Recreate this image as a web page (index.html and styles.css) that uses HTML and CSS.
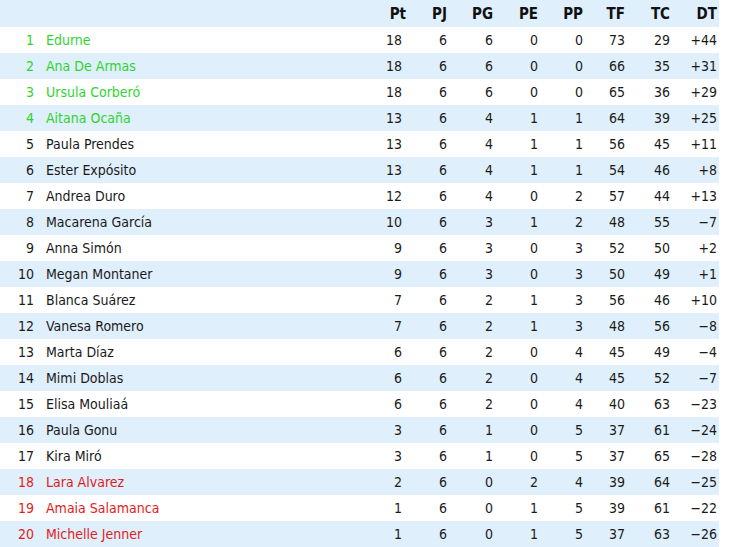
FILE: index.html
```html
<!DOCTYPE html>
<html>
<head>
<meta charset="utf-8">
<link rel="stylesheet" href="styles.css">
</head>
<body>
<div class="table">
  <div class="row head">
    <span></span><span></span>
    <span class="hpt">Pt</span><span>PJ</span><span>PG</span><span>PE</span><span>PP</span><span>TF</span><span>TC</span><span>DT</span>
  </div>
  <div class="row up"><span class="pos">1</span><span class="name">Edurne</span><span>18</span><span>6</span><span>6</span><span>0</span><span>0</span><span>73</span><span>29</span><span>+44</span></div>
  <div class="row up"><span class="pos">2</span><span class="name">Ana De Armas</span><span>18</span><span>6</span><span>6</span><span>0</span><span>0</span><span>66</span><span>35</span><span>+31</span></div>
  <div class="row up"><span class="pos">3</span><span class="name">Ursula Corberó</span><span>18</span><span>6</span><span>6</span><span>0</span><span>0</span><span>65</span><span>36</span><span>+29</span></div>
  <div class="row up"><span class="pos">4</span><span class="name">Aitana Ocaña</span><span>13</span><span>6</span><span>4</span><span>1</span><span>1</span><span>64</span><span>39</span><span>+25</span></div>
  <div class="row"><span class="pos">5</span><span class="name">Paula Prendes</span><span>13</span><span>6</span><span>4</span><span>1</span><span>1</span><span>56</span><span>45</span><span>+11</span></div>
  <div class="row"><span class="pos">6</span><span class="name">Ester Expósito</span><span>13</span><span>6</span><span>4</span><span>1</span><span>1</span><span>54</span><span>46</span><span>+8</span></div>
  <div class="row"><span class="pos">7</span><span class="name">Andrea Duro</span><span>12</span><span>6</span><span>4</span><span>0</span><span>2</span><span>57</span><span>44</span><span>+13</span></div>
  <div class="row"><span class="pos">8</span><span class="name">Macarena García</span><span>10</span><span>6</span><span>3</span><span>1</span><span>2</span><span>48</span><span>55</span><span>−7</span></div>
  <div class="row"><span class="pos">9</span><span class="name">Anna Simón</span><span>9</span><span>6</span><span>3</span><span>0</span><span>3</span><span>52</span><span>50</span><span>+2</span></div>
  <div class="row"><span class="pos">10</span><span class="name">Megan Montaner</span><span>9</span><span>6</span><span>3</span><span>0</span><span>3</span><span>50</span><span>49</span><span>+1</span></div>
  <div class="row"><span class="pos">11</span><span class="name">Blanca Suárez</span><span>7</span><span>6</span><span>2</span><span>1</span><span>3</span><span>56</span><span>46</span><span>+10</span></div>
  <div class="row"><span class="pos">12</span><span class="name">Vanesa Romero</span><span>7</span><span>6</span><span>2</span><span>1</span><span>3</span><span>48</span><span>56</span><span>−8</span></div>
  <div class="row"><span class="pos">13</span><span class="name">Marta Díaz</span><span>6</span><span>6</span><span>2</span><span>0</span><span>4</span><span>45</span><span>49</span><span>−4</span></div>
  <div class="row"><span class="pos">14</span><span class="name">Mimi Doblas</span><span>6</span><span>6</span><span>2</span><span>0</span><span>4</span><span>45</span><span>52</span><span>−7</span></div>
  <div class="row"><span class="pos">15</span><span class="name">Elisa Mouliaá</span><span>6</span><span>6</span><span>2</span><span>0</span><span>4</span><span>40</span><span>63</span><span>−23</span></div>
  <div class="row"><span class="pos">16</span><span class="name">Paula Gonu</span><span>3</span><span>6</span><span>1</span><span>0</span><span>5</span><span>37</span><span>61</span><span>−24</span></div>
  <div class="row"><span class="pos">17</span><span class="name">Kira Miró</span><span>3</span><span>6</span><span>1</span><span>0</span><span>5</span><span>37</span><span>65</span><span>−28</span></div>
  <div class="row down"><span class="pos">18</span><span class="name">Lara Alvarez</span><span>2</span><span>6</span><span>0</span><span>2</span><span>4</span><span>39</span><span>64</span><span>−25</span></div>
  <div class="row down"><span class="pos">19</span><span class="name">Amaia Salamanca</span><span>1</span><span>6</span><span>0</span><span>1</span><span>5</span><span>39</span><span>61</span><span>−22</span></div>
  <div class="row down"><span class="pos">20</span><span class="name">Michelle Jenner</span><span>1</span><span>6</span><span>0</span><span>1</span><span>5</span><span>37</span><span>63</span><span>−26</span></div>
</div>
</body>
</html>
```

FILE: styles.css
```css
html, body {
  margin: 0;
  padding: 0;
  background: #ffffff;
}
body {
  font-family: "DejaVu Sans Condensed", "DejaVu Sans", sans-serif;
  font-size: 14px;
  color: #1a1a1a;
}
.table {
  width: 719px;
}
.row {
  display: grid;
  grid-template-columns: 34px 1fr 45px 45px 46px 45px 45px 42px 45px 47px;
  padding-right: 2px;
  height: 26px;
  align-items: center;
  text-align: right;
}
.row:nth-child(odd) {
  background: #dfeffb;
}
.row .name {
  text-align: left;
  padding-left: 12px;
}
.head {
  height: 27px;
  background: #e0d4c2;
  font-weight: bold;
  font-size: 15px;
  color: #111;
}
.head .hpt {
  margin-right: -4px;
}
.up .pos, .up .name {
  color: #2fd42f;
}
.down .pos, .down .name {
  color: #e21c1c;
}
```
